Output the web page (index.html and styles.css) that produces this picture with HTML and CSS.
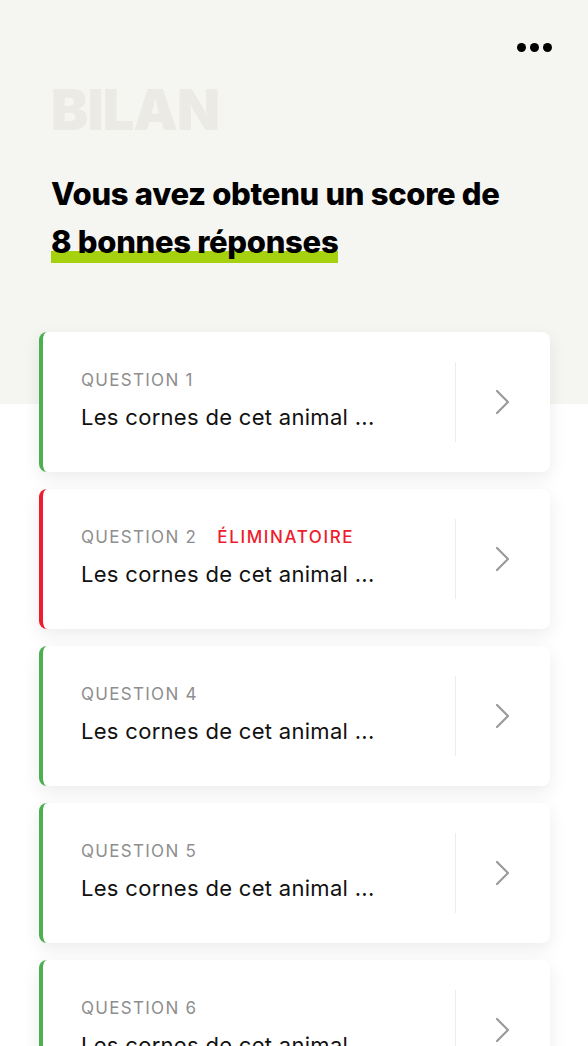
FILE: index.html
```
<!DOCTYPE html>
<html lang="fr">

<head>
    <meta charset="UTF-8" />
    <meta name="viewport" content="width=device-width, initial-scale=1.0" />
    <title>Bilan</title>
    <link rel="stylesheet" href="styles.css">
</head>

<body>
    <div class="top-bar">
        <button class="more-btn" aria-label="Plus">
            <span></span><span></span><span></span>
        </button>
    </div>

    <div class="hero">
        <h1 class="hero-title">BILAN</h1>
        <h2 class="score">Vous avez obtenu un score de<br><span class="mark">8 bonnes réponses</span></h2>
    </div>

    <div class="questions">
        <div class="question-card good">
            <div class="question-body">
                <p class="question-label">QUESTION 1</p>
                <p class="question-text">Les cornes de cet animal ...</p>
            </div>
            <div class="question-arrow">
                <svg width="16" height="26" viewBox="0 0 16 26"><path d="M2 2 L13 13 L2 24" fill="none" stroke="#9a9a9a" stroke-width="2.2" stroke-linecap="round" stroke-linejoin="round"/></svg>
            </div>
        </div>

        <div class="question-card bad">
            <div class="question-body">
                <p class="question-label">QUESTION 2 <span class="tag">ÉLIMINATOIRE</span></p>
                <p class="question-text">Les cornes de cet animal ...</p>
            </div>
            <div class="question-arrow">
                <svg width="16" height="26" viewBox="0 0 16 26"><path d="M2 2 L13 13 L2 24" fill="none" stroke="#9a9a9a" stroke-width="2.2" stroke-linecap="round" stroke-linejoin="round"/></svg>
            </div>
        </div>

        <div class="question-card good">
            <div class="question-body">
                <p class="question-label">QUESTION 4</p>
                <p class="question-text">Les cornes de cet animal ...</p>
            </div>
            <div class="question-arrow">
                <svg width="16" height="26" viewBox="0 0 16 26"><path d="M2 2 L13 13 L2 24" fill="none" stroke="#9a9a9a" stroke-width="2.2" stroke-linecap="round" stroke-linejoin="round"/></svg>
            </div>
        </div>

        <div class="question-card good">
            <div class="question-body">
                <p class="question-label">QUESTION 5</p>
                <p class="question-text">Les cornes de cet animal ...</p>
            </div>
            <div class="question-arrow">
                <svg width="16" height="26" viewBox="0 0 16 26"><path d="M2 2 L13 13 L2 24" fill="none" stroke="#9a9a9a" stroke-width="2.2" stroke-linecap="round" stroke-linejoin="round"/></svg>
            </div>
        </div>

        <div class="question-card good">
            <div class="question-body">
                <p class="question-label">QUESTION 6</p>
                <p class="question-text">Les cornes de cet animal ...</p>
            </div>
            <div class="question-arrow">
                <svg width="16" height="26" viewBox="0 0 16 26"><path d="M2 2 L13 13 L2 24" fill="none" stroke="#9a9a9a" stroke-width="2.2" stroke-linecap="round" stroke-linejoin="round"/></svg>
            </div>
        </div>
    </div>
</body>

</html>
```

FILE: styles.css
```
* {
    box-sizing: border-box;
    margin: 0;
    padding: 0;
}

body {
    font-family: 'Inter', 'Noto Sans', sans-serif;
    background: linear-gradient(to bottom, #f5f5f2 0, #f5f5f2 404px, #ffffff 404px);
    color: #111;
    overflow: hidden;
}

.top-bar {
    display: flex;
    justify-content: flex-end;
    padding: 43px 36px 0 0;
}

.more-btn {
    display: flex;
    gap: 4px;
    background: none;
    border: none;
    cursor: pointer;
}

.more-btn span {
    width: 9px;
    height: 9px;
    border-radius: 50%;
    background: #000;
}

.hero {
    padding: 28px 40px 0 51px;
}

.hero-title {
    font-size: 56px;
    font-weight: 900;
    color: #ebeae5;
    letter-spacing: -1px;
    line-height: 60px;
}

.score {
    margin-top: 30px;
    font-size: 31px;
    font-weight: 800;
    line-height: 48px;
    letter-spacing: -0.3px;
    color: #000;
}

.mark {
    padding-bottom: 3px;
    background: linear-gradient(to bottom, transparent 0, transparent 28px, #a6d10e 28px);
}

.questions {
    display: flex;
    flex-direction: column;
    gap: 17px;
    padding: 0 38px 0 39px;
    margin-top: 66px;
}

.question-card {
    display: flex;
    height: 140px;
    background: #fff;
    border-radius: 8px;
    border-left: 4px solid #4caf50;
    box-shadow: 0 6px 18px rgba(0, 0, 0, 0.08);
    flex-shrink: 0;
}

.question-card.bad {
    border-left-color: #ee1c2e;
}

.question-body {
    flex: 1;
    display: flex;
    flex-direction: column;
    justify-content: center;
    padding-left: 38px;
    padding-bottom: 4px;
}

.question-label {
    font-size: 17px;
    color: #8e8e8e;
    letter-spacing: 1.3px;
    line-height: 22px;
}

.tag {
    color: #ee1c2e;
    font-weight: 500;
    letter-spacing: 1.6px;
    margin-left: 14px;
}

.question-text {
    margin-top: 11px;
    font-size: 22px;
    line-height: 30px;
    letter-spacing: 0.3px;
    color: #111;
}

.question-arrow {
    width: 95px;
    margin: 30px 0;
    border-left: 1px solid #ececec;
    display: flex;
    align-items: center;
    justify-content: center;
}
```
